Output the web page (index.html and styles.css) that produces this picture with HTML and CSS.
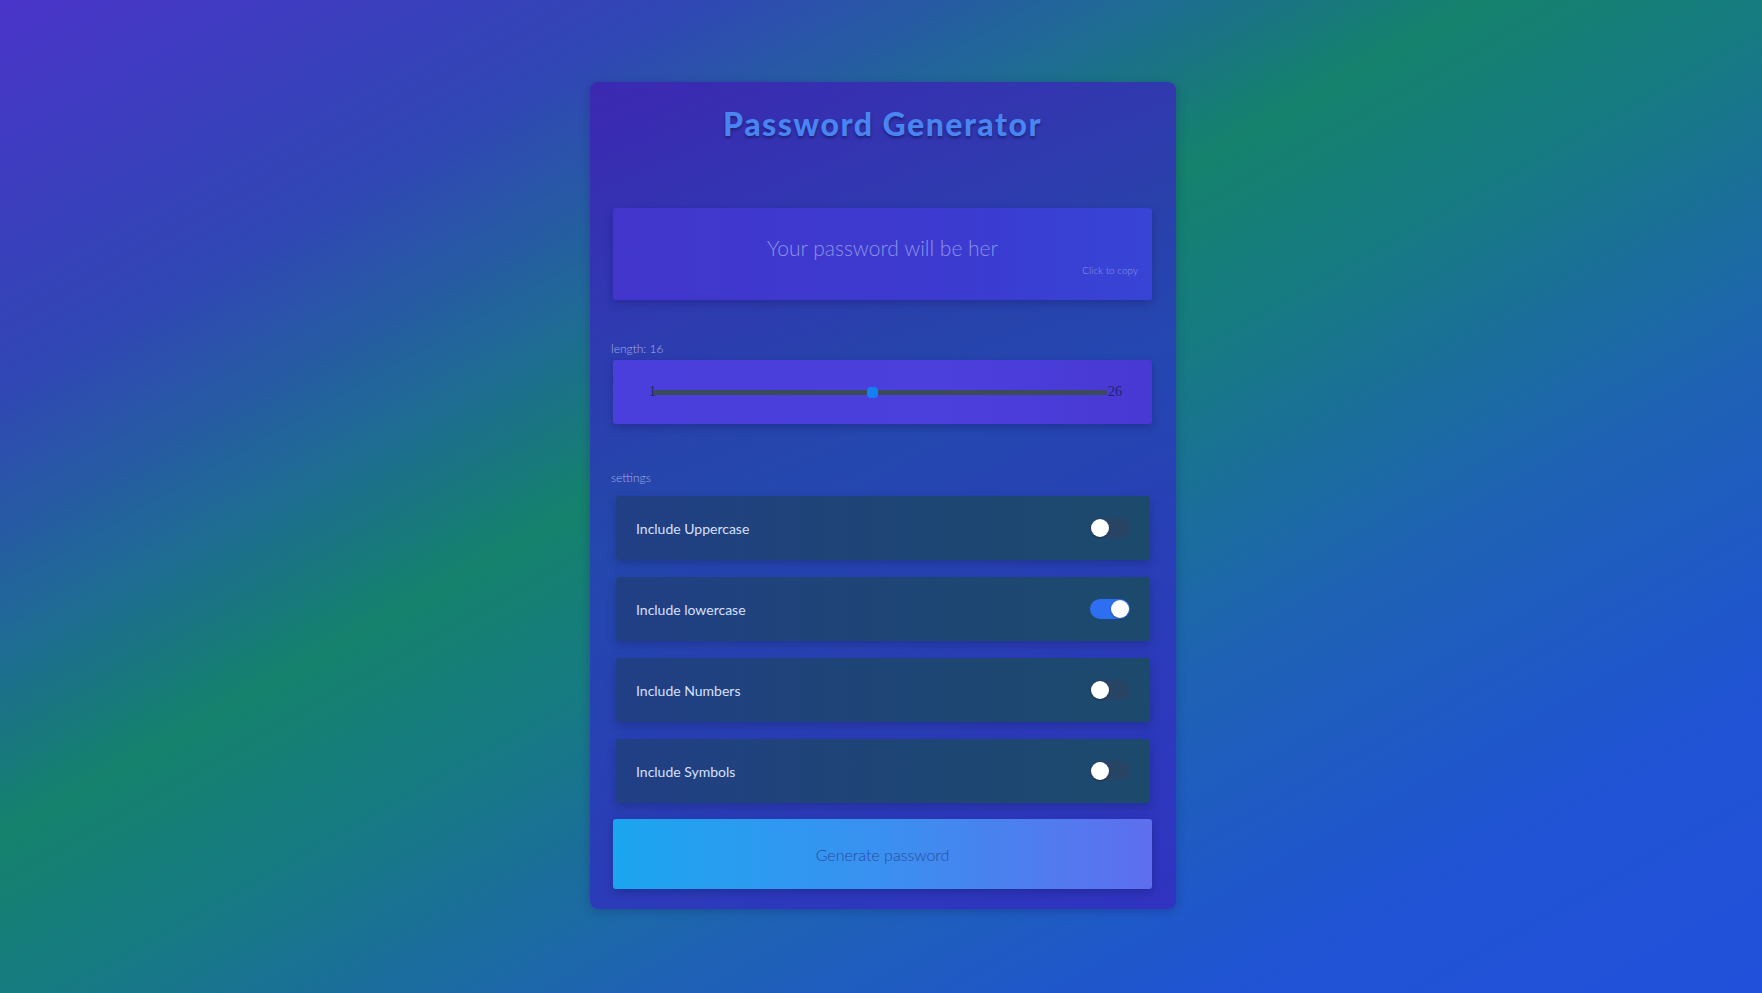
FILE: index.html
```html
<!DOCTYPE html>
<html lang="en">
<head>
<meta charset="utf-8">
<title>Password Generator</title>
<link rel="stylesheet" href="styles.css">
</head>
<body>
<main class="card">
  <h1 class="title">Password Generator</h1>
  <div class="result">
    <span class="result-text">Your password will be her</span>
    <span class="copy">Click to copy</span>
  </div>
  <div class="label length-label">length: 16</div>
  <div class="slider-box">
    <span class="num min">1</span>
    <div class="track"><span class="thumb"></span></div>
    <span class="num max">26</span>
  </div>
  <div class="label settings-label">settings</div>
  <div class="settings">
    <div class="option"><span>Include Uppercase</span><span class="toggle"><span class="knob"></span></span></div>
    <div class="option"><span>Include lowercase</span><span class="toggle on"><span class="knob"></span></span></div>
    <div class="option"><span>Include Numbers</span><span class="toggle"><span class="knob"></span></span></div>
    <div class="option"><span>Include Symbols</span><span class="toggle"><span class="knob"></span></span></div>
  </div>
  <button class="generate">Generate password</button>
</main>
</body>
</html>
```
FILE: styles.css
```css
html, body {
  margin: 0;
  padding: 0;
}
body {
  width: 1762px;
  height: 993px;
  overflow: hidden;
  font-family: "Lato", "Open Sans", sans-serif;
  background: linear-gradient(to bottom right, #4934c9 0%, #3048b4 20%, #1f6a96 32%, #14826c 42%, #177a84 52%, #1e62b4 68%, #2053d4 85%, #2150da 100%);
  display: flex;
  justify-content: center;
  align-items: flex-start;
}
.card {
  margin-top: 82px;
  margin-left: 4px;
  width: 586px;
  box-sizing: border-box;
  height: 827px;
  padding: 18px 24px 20px 23px;
  border-radius: 8px;
  background: linear-gradient(160deg, rgba(62, 36, 178, 0.88) 0%, rgba(40, 56, 190, 0.78) 45%, rgba(52, 42, 190, 0.8) 100%);
  box-shadow: 0 2px 10px rgba(20, 10, 80, 0.25);
  display: flex;
  flex-direction: column;
}
.title {
  margin: 0;
  text-align: center;
  font-family: "Lato", sans-serif;
  font-weight: 900;
  font-size: 32px;
  line-height: 48px;
  color: #4a84f2;
  text-shadow: 0 2px 3px rgba(10, 20, 80, 0.6);
  letter-spacing: 1.5px;
}
.result {
  margin-top: 60px;
  height: 92px;
  border-radius: 3px;
  background: linear-gradient(90deg, #4236cc, #3c3ad0 60%, #3744d6);
  box-shadow: 0 3px 8px rgba(20, 10, 90, 0.3);
  display: flex;
  align-items: center;
  justify-content: center;
  position: relative;
}
.result-text {
  font-weight: 300;
  font-size: 21px;
  color: #8c92e8;
  margin-top: -14px;
}
.copy {
  position: absolute;
  right: 14px;
  bottom: 24px;
  font-size: 10px;
  font-weight: 300;
  color: #8d9be8;
}
.label {
  font-size: 12px;
  font-weight: 300;
  color: #a4ace6;
  margin-left: -2px;
}
.length-label {
  margin-top: 41px;
  line-height: 16px;
}
.slider-box {
  margin-top: 3px;
  height: 64px;
  border-radius: 3px;
  background: linear-gradient(90deg, #4a3edc, #4c40dc 60%, #4838d4);
  box-shadow: 0 3px 8px rgba(20, 10, 90, 0.3);
  display: flex;
  align-items: center;
  padding: 0 30px 0 36px;
}
.num {
  font-family: "Liberation Serif", serif;
  font-size: 14px;
  color: #1c2468;
}
.track {
  flex: 1;
  height: 5px;
  background: #3c4a5e;
  position: relative;
  margin: 0 1px 0 -3px;
  border-radius: 2px;
}
.thumb {
  position: absolute;
  left: 214px;
  top: -3px;
  width: 11px;
  height: 11px;
  border-radius: 4px;
  background: #1480f4;
}
.settings-label {
  margin-top: 46px;
  line-height: 16px;
}
.settings {
  margin-top: 10px;
  display: flex;
  flex-direction: column;
  gap: 17px;
  padding: 0 2px 0 3px;
}
.option {
  height: 64px;
  border-radius: 3px;
  background: linear-gradient(90deg, #213f86 0%, #1f4478 40%, #1c4a6c 100%);
  box-shadow: 0 4px 10px rgba(10, 20, 60, 0.25);
  display: flex;
  align-items: center;
  justify-content: space-between;
  padding: 0 20px 0 20px;
  font-size: 14px;
  color: #d8e0ff;
}
.toggle {
  width: 40px;
  height: 20px;
  border-radius: 10px;
  background: rgba(110, 40, 60, 0.14);
  position: relative;
}
.knob {
  position: absolute;
  top: 1px;
  left: 1px;
  width: 18px;
  height: 18px;
  border-radius: 50%;
  background: #ffffff;
  box-shadow: 0 1px 2px rgba(0, 0, 0, 0.3);
}
.toggle.on {
  background: #2e6ef0;
}
.toggle.on .knob {
  left: 21px;
}
.generate {
  margin-top: 16px;
  height: 70px;
  border: none;
  border-radius: 3px;
  background: linear-gradient(90deg, #1ba6f0 0%, #3a90f0 50%, #5e6eee 100%);
  box-shadow: 0 3px 8px rgba(10, 20, 80, 0.3);
  font-family: "Lato", sans-serif;
  font-weight: 300;
  font-size: 16px;
  color: #2a4c9e;
  cursor: pointer;
}
```
